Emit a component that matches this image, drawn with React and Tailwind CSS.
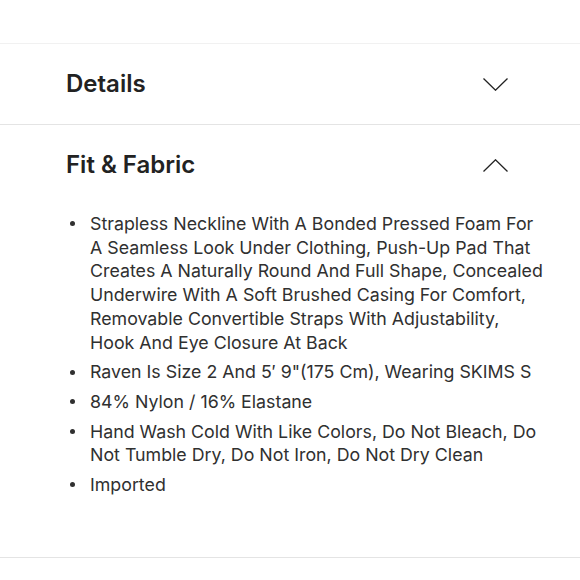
const items = [
  "Strapless Neckline With A Bonded Pressed Foam For A Seamless Look Under Clothing, Push-Up Pad That Creates A Naturally Round And Full Shape, Concealed Underwire With A Soft Brushed Casing For Comfort, Removable Convertible Straps With Adjustability, Hook And Eye Closure At Back",
  "Raven Is Size 2 And 5\u2032 9\"(175 Cm), Wearing SKIMS S",
  "84% Nylon / 16% Elastane",
  "Hand Wash Cold With Like Colors, Do Not Bleach, Do Not Tumble Dry, Do Not Iron, Do Not Dry Clean",
  "Imported",
];

function Chevron({ up }) {
  return (
    <svg width="25" height="13" viewBox="0 0 25 13" fill="none" aria-hidden="true">
      <polyline
        points={up ? "0.5,12.5 12.5,0.8 24.5,12.5" : "0.5,0.5 12.5,12.2 24.5,0.5"}
        stroke="#222"
        strokeWidth="1.3"
      />
    </svg>
  );
}

function Header({ title, open }) {
  return (
    <button className="flex h-[80px] w-full items-center justify-between pl-[66px] pr-[72px] text-left">
      <span className="text-[24px] font-semibold text-[#222]">{title}</span>
      <Chevron up={open} />
    </button>
  );
}

export default function App() {
  return (
    <div className="h-[580px] w-[580px] bg-white font-['Inter',sans-serif]">
      <div className="h-[43px]" />
      <section className="border-t border-[#f1f1f1]">
        <Header title="Details" open={false} />
      </section>
      <section className="border-t border-[#e4e4e4]">
        <Header title="Fit & Fabric" open />
        <ul className="flex flex-col gap-[6px] pb-[60px] pl-[66px] pr-[35px] pt-[7px]">
          {items.map((text) => (
            <li key={text} className="flex text-[17.8px] leading-[23.7px] text-[#303030]">
              <span className="flex h-[23.7px] w-[24px] shrink-0 items-center pl-[4px]">
                <span className="h-[5px] w-[5px] rounded-full bg-[#303030]" />
              </span>
              <span>{text}</span>
            </li>
          ))}
        </ul>
      </section>
      <div className="border-t border-[#e4e4e4]" />
    </div>
  );
}
